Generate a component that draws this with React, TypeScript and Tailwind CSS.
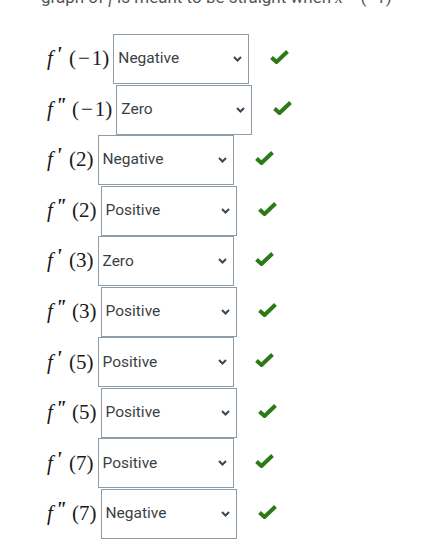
import { useState } from 'react';

type Row = {
  order: 1 | 2;
  x: string;
  value: string;
};

const ROWS: Row[] = [
  { order: 1, x: '−1', value: 'Negative' },
  { order: 2, x: '−1', value: 'Zero' },
  { order: 1, x: '2', value: 'Negative' },
  { order: 2, x: '2', value: 'Positive' },
  { order: 1, x: '3', value: 'Zero' },
  { order: 2, x: '3', value: 'Positive' },
  { order: 1, x: '5', value: 'Positive' },
  { order: 2, x: '5', value: 'Positive' },
  { order: 1, x: '7', value: 'Positive' },
  { order: 2, x: '7', value: 'Negative' },
];

const OPTIONS = ['Positive', 'Negative', 'Zero'];

function Check() {
  return (
    <svg width="19" height="14" viewBox="0 0 19 14" className="shrink-0">
      <path d="M1.5 7.5 L6.5 12 L17.5 1.5" fill="none" stroke="#2b7a16" strokeWidth="4" strokeLinejoin="miter" />
    </svg>
  );
}

function Chevron() {
  return (
    <svg width="9" height="6" viewBox="0 0 9 6" className="pointer-events-none absolute right-[7px] top-1/2 -translate-y-1/2">
      <path d="M1 1 L4.5 4.5 L8 1" fill="none" stroke="#3b4650" strokeWidth="2" />
    </svg>
  );
}

function Label({ row }: { row: Row }) {
  const neg = row.x.startsWith('−');
  return (
    <span className="flex h-[50px] items-center whitespace-nowrap font-['Liberation_Serif',serif] text-[21px] text-[#1a1a1a]">
      <span className={row.order === 1 ? 'relative inline-block w-[22px]' : 'relative inline-block w-[25px]'}>
        <i>f</i>
        <i className="absolute left-[9px] top-[-4px] text-[21px] font-bold tracking-[-2px]">
          {row.order === 1 ? "'" : "''"}
        </i>
      </span>
      <span>(</span>
      {neg ? (
        <>
          <span className="px-[2px]">−</span>
          <span>1</span>
        </>
      ) : (
        <span>{row.x}</span>
      )}
      <span>)</span>
    </span>
  );
}

function AnswerRow({ row }: { row: Row }) {
  const [value, setValue] = useState(row.value);
  return (
    <div className="flex h-[50.55px] items-start">
      <Label row={row} />
      <div className="relative ml-[4px]">
        <select
          value={value}
          onChange={e => setValue(e.target.value)}
          className="h-[50px] w-[136px] appearance-none border border-[#8d9ca6] bg-white pl-[4px] font-['Roboto',sans-serif] text-[15.5px] text-[#3a3f44] outline-none"
        >
          {OPTIONS.map(o => (
            <option key={o} value={o}>
              {o}
            </option>
          ))}
        </select>
        <Chevron />
      </div>
      <div className="ml-[21px] flex h-[46px] items-center">
        <Check />
      </div>
    </div>
  );
}

export default function App() {
  return (
    <div className="h-[550px] w-[443px] overflow-hidden bg-white">
      <p className="-mt-[14px] pl-[41px] font-['Roboto',sans-serif] text-[17px] leading-[22px] text-[#555]">
        graph of <i className="font-['Liberation_Serif',serif]">f</i> is meant to be straight when <i className="font-['Liberation_Serif',serif]">x</i> = (−1)
      </p>
      <div className="mt-[25px] flex flex-col pl-[47px]">
        {ROWS.map((r, i) => (
          <AnswerRow key={i} row={r} />
        ))}
      </div>
    </div>
  );
}
